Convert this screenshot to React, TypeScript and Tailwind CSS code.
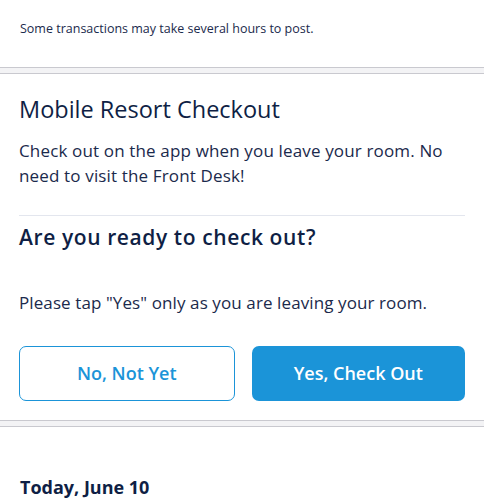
export default function App() {
  return (
    <div
      className="w-[484px] h-[500px] bg-white overflow-hidden text-[#1b2a4c]"
      style={{ fontFamily: "'Open Sans', Lato, sans-serif" }}
    >
      <div className="px-5 pt-[19px] pb-[28px] text-[12.5px] leading-[20px]">
        Some transactions may take several hours to post.
      </div>
      <div className="h-[7px] bg-[#f3f3f5] border-y border-[#c9c9cf]"></div>

      <div className="px-[19px]">
        <h2 className="pt-[20px] text-[23.5px] leading-[30px] text-[#0f1f45]">
          Mobile Resort Checkout
        </h2>
        <p className="mt-[14px] text-[17px] leading-[25px] tracking-[0.15px]">
          Check out on the app when you leave your room. No need to visit the
          Front Desk!
        </p>
        <div className="mt-[27px] h-px bg-[#e3e6ee]"></div>
        <h3 className="mt-[7px] text-[21px] leading-[28px] font-semibold tracking-[0.6px] text-[#0f1f45]">
          Are you ready to check out?
        </h3>
        <p className="mt-[40px] text-[17px] leading-[24px] tracking-[0.1px]">
          Please tap "Yes" only as you are leaving your room.
        </p>
        <div className="mt-[31px] flex gap-[17px]">
          <button className="flex-1 h-[55px] rounded-[7px] border border-[#1b94d8] text-[#1b94d8] text-[18px] font-semibold">
            No, Not Yet
          </button>
          <button className="flex-1 h-[55px] rounded-[7px] bg-[#1b94d8] text-white text-[18px] font-semibold">
            Yes, Check Out
          </button>
        </div>
      </div>

      <div className="mt-[19px] h-[7px] bg-[#f3f3f5] border-y border-[#c9c9cf]"></div>

      <div className="px-5 pt-[48px] text-[18px] leading-[24px] font-bold text-[#0f1f45]">
        Today, June 10
      </div>
    </div>
  );
}
